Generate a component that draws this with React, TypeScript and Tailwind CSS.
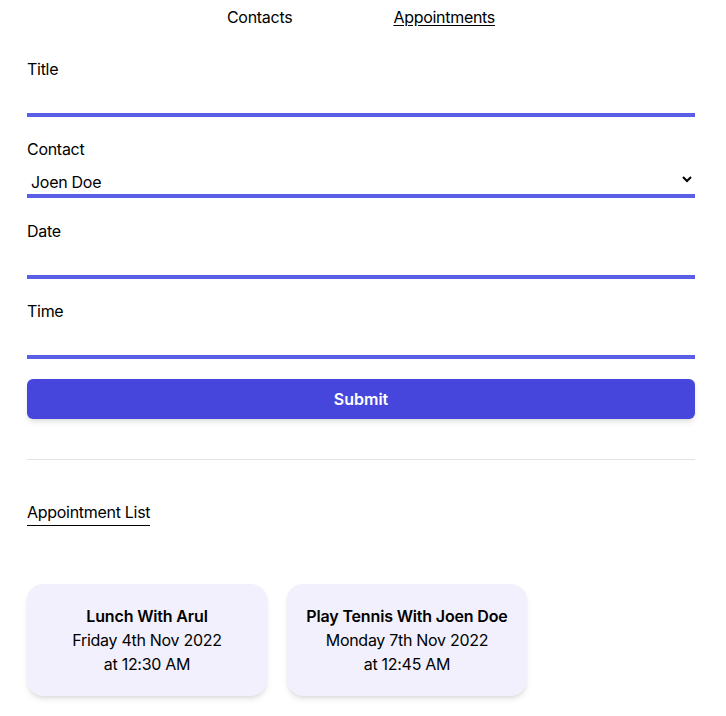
import { useState } from 'react';

const appointments = [
  { title: 'Lunch With Arul', date: 'Friday 4th Nov 2022', time: '12:30 AM' },
  { title: 'Play Tennis With Joen Doe', date: 'Monday 7th Nov 2022', time: '12:45 AM' },
];

export default function App() {
  const [title, setTitle] = useState('');
  const [contact, setContact] = useState('Joen Doe');
  const [date, setDate] = useState('');
  const [time, setTime] = useState('');

  const inputClass =
    'block w-full h-[36px] border-0 border-b-4 border-[#5a5fe6] bg-transparent px-1 outline-none';

  return (
    <div className="min-h-screen bg-white text-black font-['Inter','Liberation_Sans',sans-serif] text-base tracking-[-0.018em]">
      <div className="px-[27px] w-[722px]">
        <nav className="flex justify-center gap-[101px] pt-[5px] h-[57px]">
          <a className="leading-6">Contacts</a>
          <a className="leading-6 underline underline-offset-2">Appointments</a>
        </nav>

        <form className="flex flex-col" onSubmit={(e) => e.preventDefault()}>
          <label className="block leading-6">Title</label>
          <input className={inputClass} value={title} onChange={(e) => setTitle(e.target.value)} />

          <label className="block leading-6 mt-5">Contact</label>
          <select
            className="block w-full h-[37px] border-0 border-b-4 border-[#5a5fe6] bg-transparent pt-[9px] outline-none"
            value={contact}
            onChange={(e) => setContact(e.target.value)}
          >
            <option>Joen Doe</option>
            <option>Arul</option>
          </select>

          <label className="block leading-6 mt-[21px]">Date</label>
          <input className={inputClass} value={date} onChange={(e) => setDate(e.target.value)} />

          <label className="block leading-6 mt-5">Time</label>
          <input className={inputClass} value={time} onChange={(e) => setTime(e.target.value)} />

          <button
            type="submit"
            className="mt-5 h-10 w-full rounded-md bg-[#4646dc] font-semibold tracking-normal text-white shadow-md"
          >
            Submit
          </button>
        </form>

        <hr className="mt-10 border-t border-[#e2e2e2]" />

        <div className="mt-10">
          <span className="inline-block leading-6 border-b border-black pb-[1px]">Appointment List</span>
        </div>

        <div className="mt-[58px] flex gap-5">
          {appointments.map((a) => (
            <div
              key={a.title}
              className="w-[240px] h-[112px] rounded-2xl bg-[#f1f0fc] shadow-md flex flex-col items-center justify-center text-center leading-6"
            >
              <div className="font-semibold tracking-[-0.01em]">{a.title}</div>
              <div>{a.date}</div>
              <div>at {a.time}</div>
            </div>
          ))}
        </div>
      </div>
    </div>
  );
}
